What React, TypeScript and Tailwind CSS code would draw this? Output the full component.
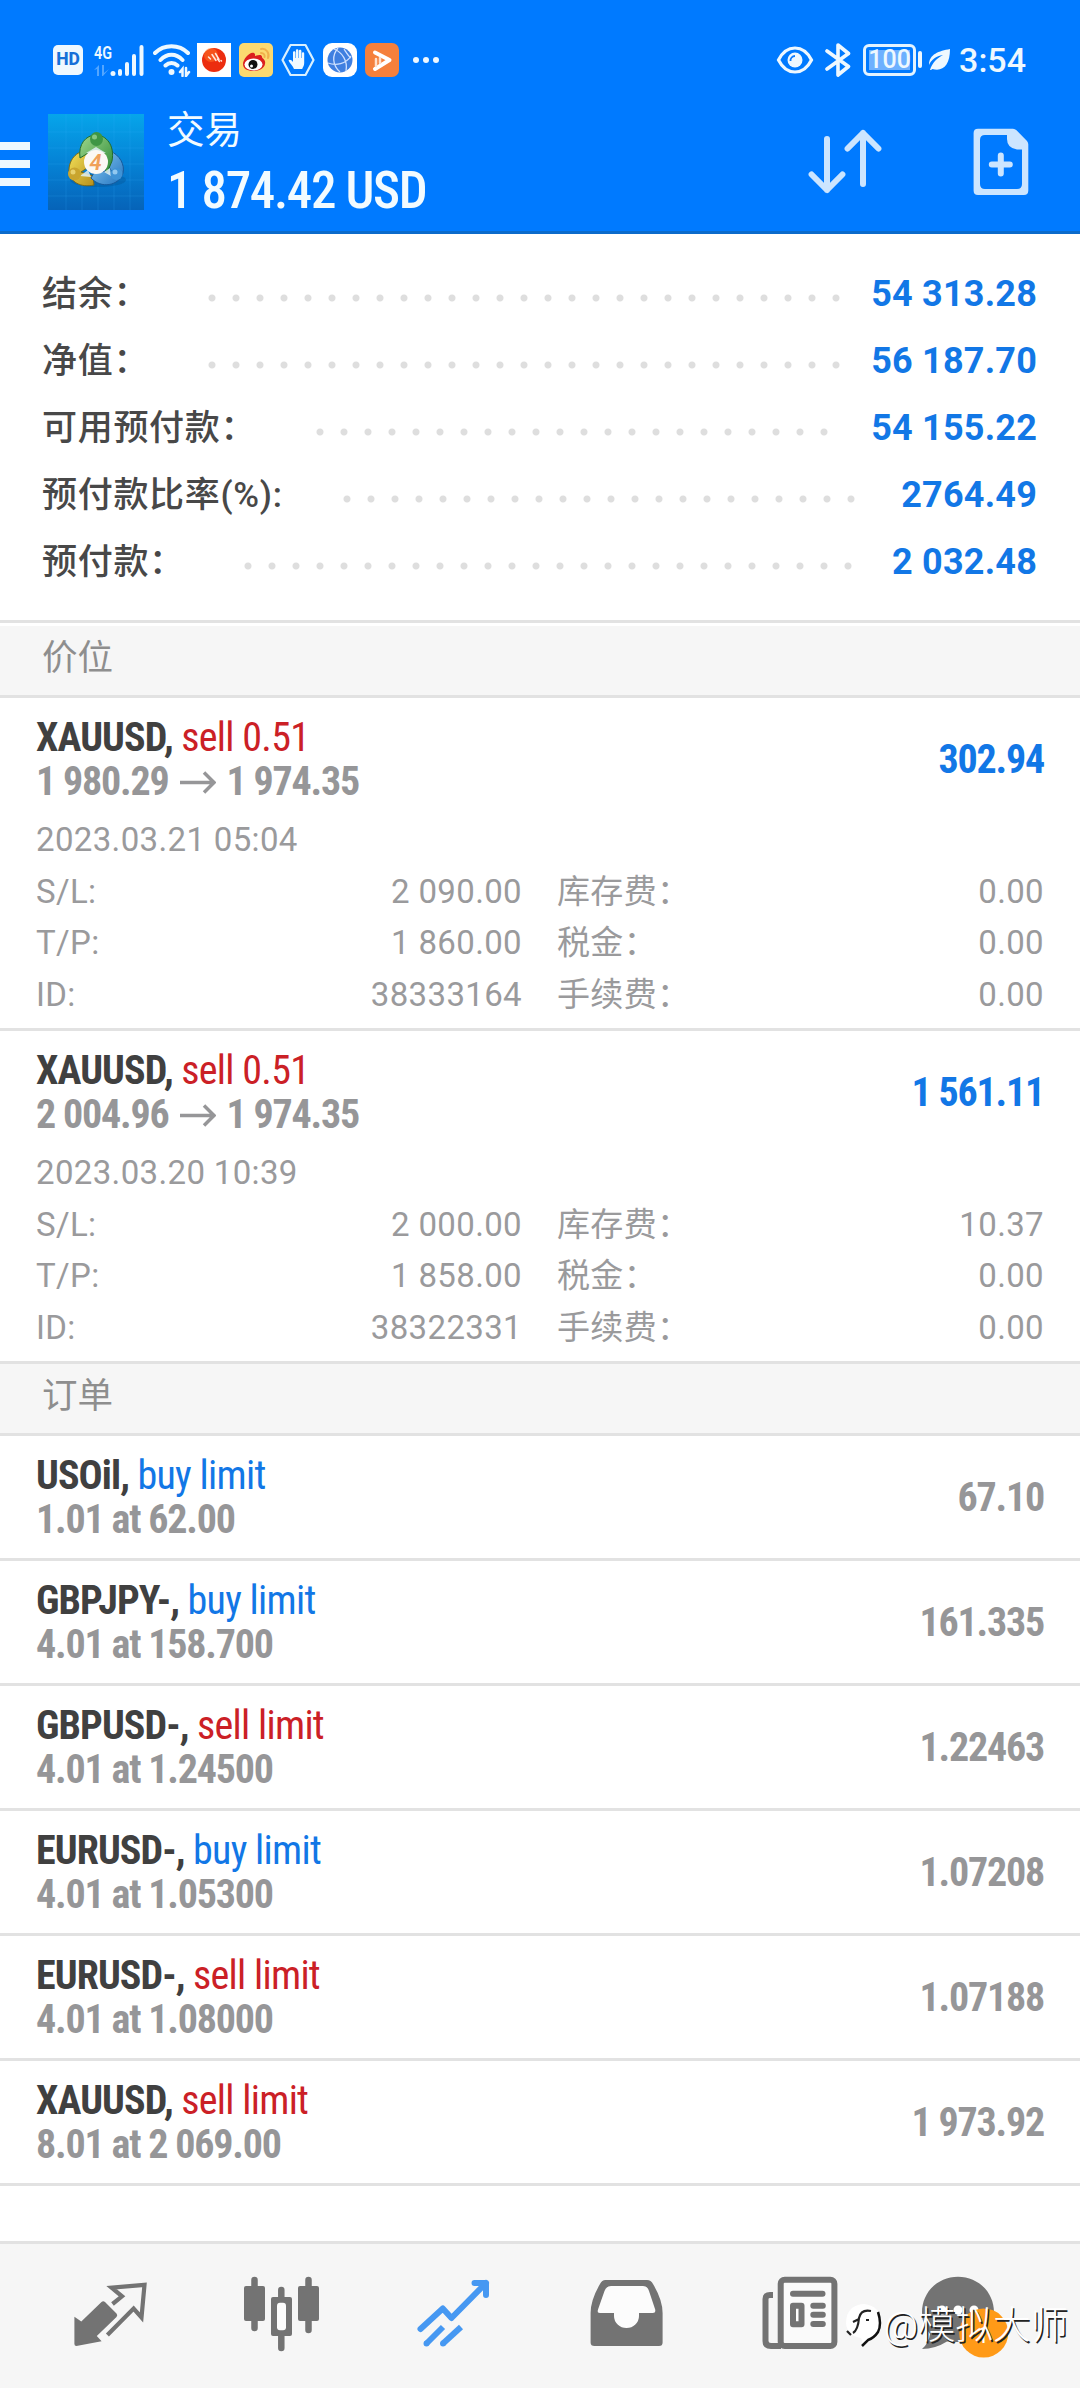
import type { ReactNode } from 'react'
import clsx from 'clsx'

type Side = 'buy' | 'sell'

interface Position {
	symbol: string
	side: Side
	volume: string
	open: string
	current: string
	profit: string
	time: string
	sl: string
	tp: string
	id: string
	swap: string
	tax: string
	fee: string
}

interface Order {
	symbol: string
	side: Side
	detail: string
	price: string
}

const summary = [
	{ label: '结余：', value: '54 313.28', labelClass: 'w-[158px]', dotsClass: 'w-[648px]' },
	{ label: '净值：', value: '56 187.70', labelClass: 'w-[158px]', dotsClass: 'w-[648px]' },
	{ label: '可用预付款：', value: '54 155.22', labelClass: 'w-[266px]', dotsClass: 'w-[528px]' },
	{ label: '预付款比率(%):', value: '2764.49', labelClass: 'w-[293px]', dotsClass: 'w-[528px]' },
	{ label: '预付款：', value: '2 032.48', labelClass: 'w-[194px]', dotsClass: 'w-[624px]' },
]

const positions: Position[] = [
	{
		symbol: 'XAUUSD',
		side: 'sell',
		volume: '0.51',
		open: '1 980.29',
		current: '1 974.35',
		profit: '302.94',
		time: '2023.03.21 05:04',
		sl: '2 090.00',
		tp: '1 860.00',
		id: '38333164',
		swap: '0.00',
		tax: '0.00',
		fee: '0.00',
	},
	{
		symbol: 'XAUUSD',
		side: 'sell',
		volume: '0.51',
		open: '2 004.96',
		current: '1 974.35',
		profit: '1 561.11',
		time: '2023.03.20 10:39',
		sl: '2 000.00',
		tp: '1 858.00',
		id: '38322331',
		swap: '10.37',
		tax: '0.00',
		fee: '0.00',
	},
]

const orders: Order[] = [
	{ symbol: 'USOil', side: 'buy', detail: '1.01 at 62.00', price: '67.10' },
	{ symbol: 'GBPJPY-', side: 'buy', detail: '4.01 at 158.700', price: '161.335' },
	{ symbol: 'GBPUSD-', side: 'sell', detail: '4.01 at 1.24500', price: '1.22463' },
	{ symbol: 'EURUSD-', side: 'buy', detail: '4.01 at 1.05300', price: '1.07208' },
	{ symbol: 'EURUSD-', side: 'sell', detail: '4.01 at 1.08000', price: '1.07188' },
	{ symbol: 'XAUUSD', side: 'sell', detail: '8.01 at 2 069.00', price: '1 973.92' },
]

function StatusBar() {
	return (
		<div className="flex h-[84px] items-center pt-[35px] pl-[53px] pr-[54px] text-[#eef8ff]">
			<div className="flex h-[30px] w-[30px] items-center justify-center rounded-[5px] bg-[#eef8ff] text-[17.5px] font-extrabold text-[#1670d8]">
				HD
			</div>
			<svg className="ml-[11px] overflow-visible" width="50" height="34" viewBox="0 0 50 34" fill="currentColor">
				<text x="0" y="15.500" fontSize="19" fontWeight="600" textLength="18" lengthAdjust="spacingAndGlyphs">4G</text>
				<path d="M0 27l5-5v11H3v-7zM8 22h2v8l5-4-6 7H8z" opacity=".35" />
				<circle cx="19" cy="30.500" r="2.500" />
				<path d="M26 31V28M33 31V21M40 31V13M47.500 31V4" stroke="currentColor" strokeWidth="4" strokeLinecap="round" />
			</svg>
			<svg className="ml-[9px]" width="38" height="34" viewBox="0 0 38 34" fill="none" stroke="currentColor" strokeWidth="4" strokeLinecap="round">
				<path d="M2 10C11 1 26 1 35 10M7.500 17C14 10 23 10 29.500 17M12.500 22.500C16 19 21 19 24.500 22.500" />
				<circle cx="18.500" cy="29" r="3" fill="currentColor" stroke="none" />
				<path d="M27 29l2.500-3v7M33 25v8l3-4" strokeWidth="2.500" />
			</svg>
			<svg className="ml-[6px]" width="34" height="34" viewBox="0 0 34 34">
				<rect width="34" height="34" fill="#fff" />
				<circle cx="17" cy="17" r="12" fill="#ec2d0f" />
				<circle cx="14" cy="12" r="7" fill="#ff7a2a" opacity=".5" />
				<path d="M11.500 14l2 2M15 11.500l4 6M18.500 10.500l3.500 6M20.500 16l2 2.500M24 17.500l.5.500" stroke="#ffe9e0" strokeWidth="1.500" strokeLinecap="round" />
			</svg>
			<svg className="ml-2" width="34" height="34" viewBox="0 0 34 34">
				<rect width="34" height="34" rx="5" fill="#fbd970" />
				<path d="M4 21c0-5 7-13 11-11 1.500.7 1 3 1 3s7-3 7 1c0 2 4 2 3 7-1 5-7 7-12 7S4 26 4 21z" fill="#dc1f1f" />
				<ellipse cx="14.500" cy="21.500" rx="9" ry="6" fill="#fff" />
				<circle cx="14" cy="21.500" r="4.500" fill="#111" />
				<circle cx="12.500" cy="23" r="1.500" fill="#fff" />
				<path d="M22 6c5-1 9 4 7 9M22 10c3 0 4 2 3.500 4" fill="none" stroke="#f0b04b" strokeWidth="2" strokeLinecap="round" />
			</svg>
			<svg className="ml-2" width="34" height="34" viewBox="0 0 34 34">
				<path d="M9.500 2h15L32.500 17l-8 15h-15L1.500 17z" fill="none" stroke="#d8f0ff" strokeWidth="2.200" strokeLinejoin="round" />
				<path d="M13 26c-1-3-4.500-6-5.500-8.500 1-1.500 3-.5 4.500 1.500V9.500c0-1.800 2.400-1.800 2.400 0V15h.5V7.500c0-1.800 2.500-1.800 2.500 0V15h.5V8c0-1.800 2.500-1.800 2.500 0v7h.5v-4.500c0-1.700 2.300-1.700 2.300 0V20c0 3-1.500 4-2 6z" fill="#f1faff" />
			</svg>
			<svg className="ml-2" width="34" height="34" viewBox="0 0 34 34" fill="none">
				<rect width="34" height="34" rx="9" fill="#fff" />
				<circle cx="17" cy="17" r="12.500" fill="#3f7fe0" />
				<path d="M11 6c8 3 14 12 12 22M5 20c8 3 18 1 23-7M17 29C9 22 9 12 15 5M21 6c2 3 5 8 7 9" stroke="#cfe1ff" strokeWidth="1.300" />
			</svg>
			<svg className="ml-2" width="34" height="34" viewBox="0 0 34 34" fill="none">
				<rect width="34" height="34" rx="7" fill="#f5803c" />
				<path d="M10 9.500L24.500 17 10 26" stroke="#fff" strokeWidth="4" strokeLinecap="round" strokeLinejoin="round" />
				<path d="M11 16v7M15 15v5" stroke="#ffe0cc" strokeWidth="2.500" strokeLinecap="round" />
			</svg>
			<div className="ml-[14px] flex gap-[4px]">
				<span className="size-[6px] rounded-full bg-current" />
				<span className="size-[6px] rounded-full bg-current" />
				<span className="size-[6px] rounded-full bg-current" />
			</div>

			<svg className="ml-auto" width="38" height="32" viewBox="0 0 38 32" fill="none">
				<path d="M2.500 16C6 9 12 4 19 4s13 5 16.500 12C32 23 26 28 19 28S6 23 2.500 16z" stroke="currentColor" strokeWidth="3.200" />
				<circle cx="19" cy="16" r="7.500" fill="currentColor" />
				<path d="M14.500 17a4.500 4.500 0 0 1 4.500-5" stroke="#0a7aff" strokeWidth="1.800" />
			</svg>
			<svg className="ml-[11px]" width="26" height="34" viewBox="0 0 26 34" fill="none" stroke="currentColor" strokeWidth="3.600" strokeLinejoin="round" strokeLinecap="round">
				<path d="M2 8l21.500 15.500L13 32V2l10.500 8.500L2 26" />
			</svg>
			<div className="ml-[12px] flex h-[32px] w-[53px] items-center justify-center rounded-[6px] border-[3px] border-[#e3f3ff] p-[3px]">
				<span className="flex h-full w-full items-center justify-center bg-[#6db0ff] text-[25px] leading-none font-medium">100</span>
			</div>
			<div className="ml-[2px] h-[17px] w-[4px] rounded-full bg-current" />
			<svg className="ml-[7px]" width="22" height="24" viewBox="0 0 22 24" fill="currentColor">
				<path d="M21 1C10 3 0 6 0 17c2-5 7-9 14-10C8 10 3 15 1 22c1 0 2-.5 2.500-1C14 24 21 17 21 1z" />
			</svg>
			<span className="ml-[8px] text-[34px] leading-[36px] font-medium">3:54</span>
		</div>
	)
}

function AppLogo() {
	return (
		<svg width="96" height="96" viewBox="0 0 96 96">
			<defs>
				<linearGradient id="logoBg" x1="0" y1="0" x2="0" y2="1">
					<stop offset="0" stopColor="#06a5ea" />
					<stop offset=".5" stopColor="#0583d6" />
					<stop offset="1" stopColor="#0663b8" />
				</linearGradient>
				<linearGradient id="logoGreen" x1="0" y1="0" x2="1" y2="1">
					<stop offset="0" stopColor="#9fd88d" />
					<stop offset="1" stopColor="#2d8a36" />
				</linearGradient>
				<linearGradient id="logoYellow" x1="0" y1="0" x2="1" y2="1">
					<stop offset="0" stopColor="#f3e25a" />
					<stop offset="1" stopColor="#b78f1c" />
				</linearGradient>
				<linearGradient id="logoBlue" x1="0" y1="0" x2="1" y2="1">
					<stop offset="0" stopColor="#8ccdf5" />
					<stop offset="1" stopColor="#2273bf" />
				</linearGradient>
			</defs>
			<rect width="96" height="96" fill="url(#logoBg)" />
			<path d="M18 0v96M34 0v96M50 0v96M66 0v96M82 0v96M0 18h96M0 34h96M0 50h96M0 66h96M0 82h96" stroke="#35b4ff" strokeOpacity=".18" />
			<ellipse cx="50" cy="66" rx="28" ry="7" fill="#04508f" opacity=".35" />
			<path d="M42 37c-12-2-21 8-21 19 0 12 12 18 25 15l-1-9-12-4 12-8z" fill="url(#logoYellow)" stroke="#7d6a16" />
			<path d="M62 37c10 4 15 14 13 22-4 13-22 16-32 5l4-7 17 1-7-12z" fill="url(#logoBlue)" stroke="#17599b" />
			<path d="M32 44c-2-14 6-23 16-23s19 10 16 26l-5 12-8-17-9-4z" fill="url(#logoGreen)" stroke="#226c2b" />
			<path d="M38 39l10-6 10 6zM32 62l8-6 3 7zM56 58l6-4 1 8z" fill="#dff0f5" opacity=".85" />
			<ellipse cx="48.500" cy="25" rx="6.500" ry="7" fill="#3e9645" />
			<circle cx="26.500" cy="60" r="6.500" fill="#c9a52e" />
			<circle cx="68.500" cy="60" r="6" fill="#3f93d6" />
			<circle cx="46.500" cy="23" r="2.500" fill="#a5dc9c" opacity=".7" />
			<circle cx="25" cy="58" r="2.500" fill="#f5e48a" opacity=".7" />
			<circle cx="67" cy="58" r="2.500" fill="#b7e0fb" opacity=".7" />
			<circle cx="48" cy="48" r="12" fill="#fbf8f4" />
			<text x="47.500" y="56" textAnchor="middle" fontSize="22" fontWeight="600" fontStyle="italic" fill="#f0a05a">4</text>
		</svg>
	)
}

function Header() {
	return (
		<header className="h-[234px] border-b-[3px] border-[#0c6bcb] bg-[#007aff]">
			<StatusBar />
			<div className="flex h-[147px] items-start pr-[50px]">
				<div className="mt-[58px] flex w-[30px] flex-col gap-[10px]">
					<span className="h-[8px] bg-[#eef8ff]" />
					<span className="h-[8px] bg-[#eef8ff]" />
					<span className="h-[8px] bg-[#eef8ff]" />
				</div>
				<div className="mt-[30px] ml-[18px]">
					<AppLogo />
				</div>
				<div className="mt-[25px] ml-[23px] flex flex-col gap-2 text-[#f2fbff]">
					<span className="text-[37.5px] leading-[43px]">交易</span>
					<span className="font-['Roboto_Condensed','Roboto',sans-serif] text-[51px] leading-[62px] font-medium tracking-[-1.35px]">1 874.42 USD</span>
				</div>
				<svg className="mt-[43px] ml-auto" width="80" height="70" viewBox="0 0 80 70" fill="none" stroke="#cce5ff" strokeWidth="6" strokeLinecap="round" strokeLinejoin="round">
					<path d="M21 12V63M5.600 47.500L21 63L36.400 47.500" />
					<path d="M57 57V6M41.600 21.500L57 6L72.400 21.500" />
				</svg>
				<svg className="mt-[43px] ml-[86px]" width="58" height="70" viewBox="0 0 58 70" fill="#cce5ff">
					<path
						fillRule="evenodd"
						d="M6 1.700H41Q43 1.700 44.500 3.200L55 14Q56.300 15.500 56.300 17.500V63.500Q56.300 68 51.800 68H6Q1.600 68 1.600 63.500V6Q1.600 1.700 6 1.700ZM13 8Q8 8 8 13V57Q8 62 13 62H45Q50 62 50 57V22.500H45Q35 21 35 12V8Z"
					/>
					<path d="M28.800 28.500V46.500M19.800 37.600H37.800" stroke="#cce5ff" strokeWidth="6" strokeLinecap="round" />
				</svg>
			</div>
		</header>
	)
}

function AccountSummary() {
	return (
		<div className="border-b-[3px] border-[#e2e2e2] pt-[26px] pr-[43px] pb-[25px] pl-[42px]">
			{summary.map((row) => (
				<div key={row.label} className="flex h-[67px] items-center">
					<span className={clsx('pt-[3px] text-[35px] leading-[42px] font-medium tracking-[0.7px] whitespace-nowrap text-[#484848]', row.labelClass)}>{row.label}</span>
					<span
						className={clsx(
							'mt-[8px] h-[24px] bg-[radial-gradient(circle,#dedede_3px,transparent_4px)] bg-[length:24px_24px]',
							row.dotsClass
						)}
					/>
					<span className="ml-auto text-[36px] leading-[42px] font-bold tracking-[0.2px] text-[#1277e6]">{row.value}</span>
				</div>
			))}
		</div>
	)
}

function SectionTitle({ children }: { children: ReactNode }) {
	return (
		<div className="h-[72px] border-b-[3px] border-[#e2e2e2] bg-[#f6f6f6] pl-[42px] text-[35.5px] leading-[64px] text-[#8e8e8e]">
			{children}
		</div>
	)
}

function TradeTitle({ symbol, side, text }: { symbol: string; side: Side; text: string }) {
	return (
		<div>
			<span className="font-bold tracking-[-0.9px] text-[#404040]">{symbol}, </span>
			<span className={clsx('tracking-[-0.7px]', side === 'buy' ? 'text-[#1277e6]' : 'text-[#cb2026]')}>{text}</span>
		</div>
	)
}

function Field({ label, value }: { label: string; value: string }) {
	return (
		<div className="flex h-[51.5px] items-center justify-between">
			<span>{label}</span>
			<span>{value}</span>
		</div>
	)
}

function PositionCard({ position: p }: { position: Position }) {
	return (
		<div className="h-[333px] border-b-[3px] border-[#e2e2e2] pt-[18px] pr-[36px] pl-[36px]">
			<div className="flex items-center justify-between font-['Roboto_Condensed','Roboto',sans-serif] text-[40px] leading-[44px]">
				<div>
					<TradeTitle symbol={p.symbol} side={p.side} text={`${p.side} ${p.volume}`} />
					<div className="flex items-center font-bold tracking-[-1.2px] text-[#969698]">
						<span>{p.open}</span>
						<svg className="mr-[10.5px] ml-[11.5px]" width="36" height="24" viewBox="0 0 36 24" fill="none" stroke="currentColor" strokeWidth="3.500">
							<path d="M0 12.500H34M24 2.500L34 12.500L24 22.500" />
						</svg>
						<span>{p.current}</span>
					</div>
				</div>
				<span className="font-bold tracking-[-1.2px] text-[#1277e6]">{p.profit}</span>
			</div>
			<div className="mt-[10.5px] text-[33px] leading-[40px] tracking-[0.35px] text-[#9a9a9c]">
				<div className="flex h-[51.5px] items-center">{p.time}</div>
				<div className="grid grid-cols-[486px_1fr] gap-x-[35px]">
					<div>
						<Field label="S/L:" value={p.sl} />
						<Field label="T/P:" value={p.tp} />
						<Field label="ID:" value={p.id} />
					</div>
					<div>
						<Field label="库存费：" value={p.swap} />
						<Field label="税金：" value={p.tax} />
						<Field label="手续费：" value={p.fee} />
					</div>
				</div>
			</div>
		</div>
	)
}

function OrderRow({ order }: { order: Order }) {
	return (
		<div className="flex h-[125px] items-center justify-between border-b-[3px] border-[#e2e2e2] pt-[2px] pr-[36px] pl-[36px] font-['Roboto_Condensed','Roboto',sans-serif] text-[40px] leading-[44px]">
			<div>
				<TradeTitle symbol={order.symbol} side={order.side} text={`${order.side} limit`} />
				<div className="font-bold tracking-[-1.2px] text-[#969698]">{order.detail}</div>
			</div>
			<span className="font-bold tracking-[-1.2px] text-[#969698]">{order.price}</span>
		</div>
	)
}

function NavIcon({ children }: { children: ReactNode }) {
	return (
		<div className="flex w-[172px] justify-center">
			<svg width="96" height="96" viewBox="0 0 96 96" fill="#737373">
				{children}
			</svg>
		</div>
	)
}

function BottomNav() {
	return (
		<nav className="relative flex h-[147px] border-t-[3px] border-[#e2e2e2] bg-[#f6f6f6] px-6 pt-[22px]">
			<NavIcon>
				<path d="M12.400 50.700L19.300 55.500L39.500 36Q41.200 34.500 43 36L54.500 47.500Q56 49.300 54.500 51L34.800 70L39.600 75.300L14.400 80Q12.400 80 12.400 78Z" />
				<path d="M50.500 38L60 30.300L49.600 21.700L82.500 18.800L79.500 51.500L71.600 42.500L45.400 69" fill="none" stroke="#737373" strokeWidth="4.200" />
			</NavIcon>
			<NavIcon>
				<path d="M20.500 14V62M47.300 24V33M47.300 68V82M74.500 14V64" stroke="#737373" strokeWidth="6.500" strokeLinecap="round" />
				<rect x="10" y="20" width="21" height="35" rx="2" />
				<rect x="64" y="20" width="21" height="35" rx="2" />
				<rect x="37" y="31" width="21" height="39" rx="2" />
				<rect x="43" y="36.700" width="9" height="27.600" rx="3" fill="#fcfcfc" />
			</NavIcon>
			<NavIcon>
				<g fill="none" stroke="#4698f2" strokeWidth="6" strokeLinecap="round" strokeLinejoin="round">
					<path d="M14.500 63L36.800 42.500L45.500 52L80 17M68.500 17H80V29" />
					<path d="M20.500 77.500L37 61" strokeLinecap="butt" />
					<path d="M37 77.500L55 61" strokeLinecap="butt" />
					<path d="M20.500 77.500h0M37 77.500h0" />
				</g>
			</NavIcon>
			<NavIcon>
				<path d="M27.400 14H69Q73 14 75 18Q84.600 34 84.600 47V76.500Q84.600 80 81 80H16.500Q12.600 80 12.600 76.500V47Q12.600 34 22 18Q24 14 27.400 14Z" />
				<path d="M33 20H65Q69.500 20 71 25L77.200 43.500Q78 47 74.500 47H61V50A12.500 12 0 0 1 36 50V47H22Q18.800 47 20 43.500L26.500 25Q28.500 20 33 20Z" fill="#fcfcfc" />
			</NavIcon>
			<NavIcon>
				<g fill="none" stroke="#737373">
					<path d="M23 29H20Q15.500 29 15.500 33V75Q15.500 80 21 80H31" strokeWidth="6" />
					<rect x="30.700" y="13.700" width="53.700" height="66.300" rx="4" strokeWidth="6" fill="#fafafa" />
					<path d="M43 27.700H72.500M63.300 39.700H72.800M63.300 48.700H72.800M63.300 58H72.800" strokeWidth="6" strokeLinecap="round" />
					<rect x="43" y="39.700" width="8.500" height="18.600" strokeWidth="6" strokeLinejoin="round" fill="#fff" />
				</g>
			</NavIcon>
			<NavIcon>
				<path d="M36 10.700C56 10.700 72 26 72 46.500S56 76 36 76Q30 76 25 75.500Q13 83 0 83Q7 77 8 68Q0 59 0 46.500C0 26 16 10.700 36 10.700Z" />
				<circle cx="20" cy="44" r="4.500" fill="#fff" />
				<circle cx="36" cy="44" r="4.500" fill="#fff" />
				<circle cx="52" cy="44" r="4.500" fill="#fff" />
				<circle cx="61.700" cy="67" r="24.500" fill="#ff9a17" />
				<text x="61" y="77" textAnchor="middle" fontSize="22" fill="#fff">1</text>
			</NavIcon>

			{/* signature laid over the last two tabs */}
			<div className="absolute top-[58px] right-[12px] flex items-center">
				<svg width="40" height="46" viewBox="0 0 40 46">
					<path d="M8 6Q14 2 20 2Q37 4 37 21Q36 34 25 36Q22 41 18 45Q19 39 17 36Q3 34 2 21Q2 11 8 6Z" fill="#fff" />
					<path d="M34 10Q38 22 34 30Q30 36 24 38Q21 41 18 44" fill="none" stroke="#111" strokeWidth="2.500" />
					<path d="M27 9Q17 7 15 16Q14 28 9 31M9 20L15 17M22 18h3M3 29l4 4" fill="none" stroke="#222" strokeWidth="2.200" />
				</svg>
				<span className="text-[37.5px] leading-[46px] font-light whitespace-nowrap text-white [text-shadow:1.500px_1.500px_0_#222]">
					@模拟大师
				</span>
			</div>
		</nav>
	)
}

export default function App() {
	return (
		<div lang="zh-CN" className="flex h-[2388px] w-[1080px] flex-col overflow-hidden bg-white font-['Roboto','Noto_Sans_CJK_SC',sans-serif]">
			<Header />
			<main className="flex-1">
				<AccountSummary />
				<div className="pt-[3px]">
					<SectionTitle>价位</SectionTitle>
				</div>
				{positions.map((position) => (
					<PositionCard key={position.id} position={position} />
				))}
				<SectionTitle>订单</SectionTitle>
				{orders.map((order) => (
					<OrderRow key={order.symbol + order.side} order={order} />
				))}
			</main>
			<BottomNav />
		</div>
	)
}
